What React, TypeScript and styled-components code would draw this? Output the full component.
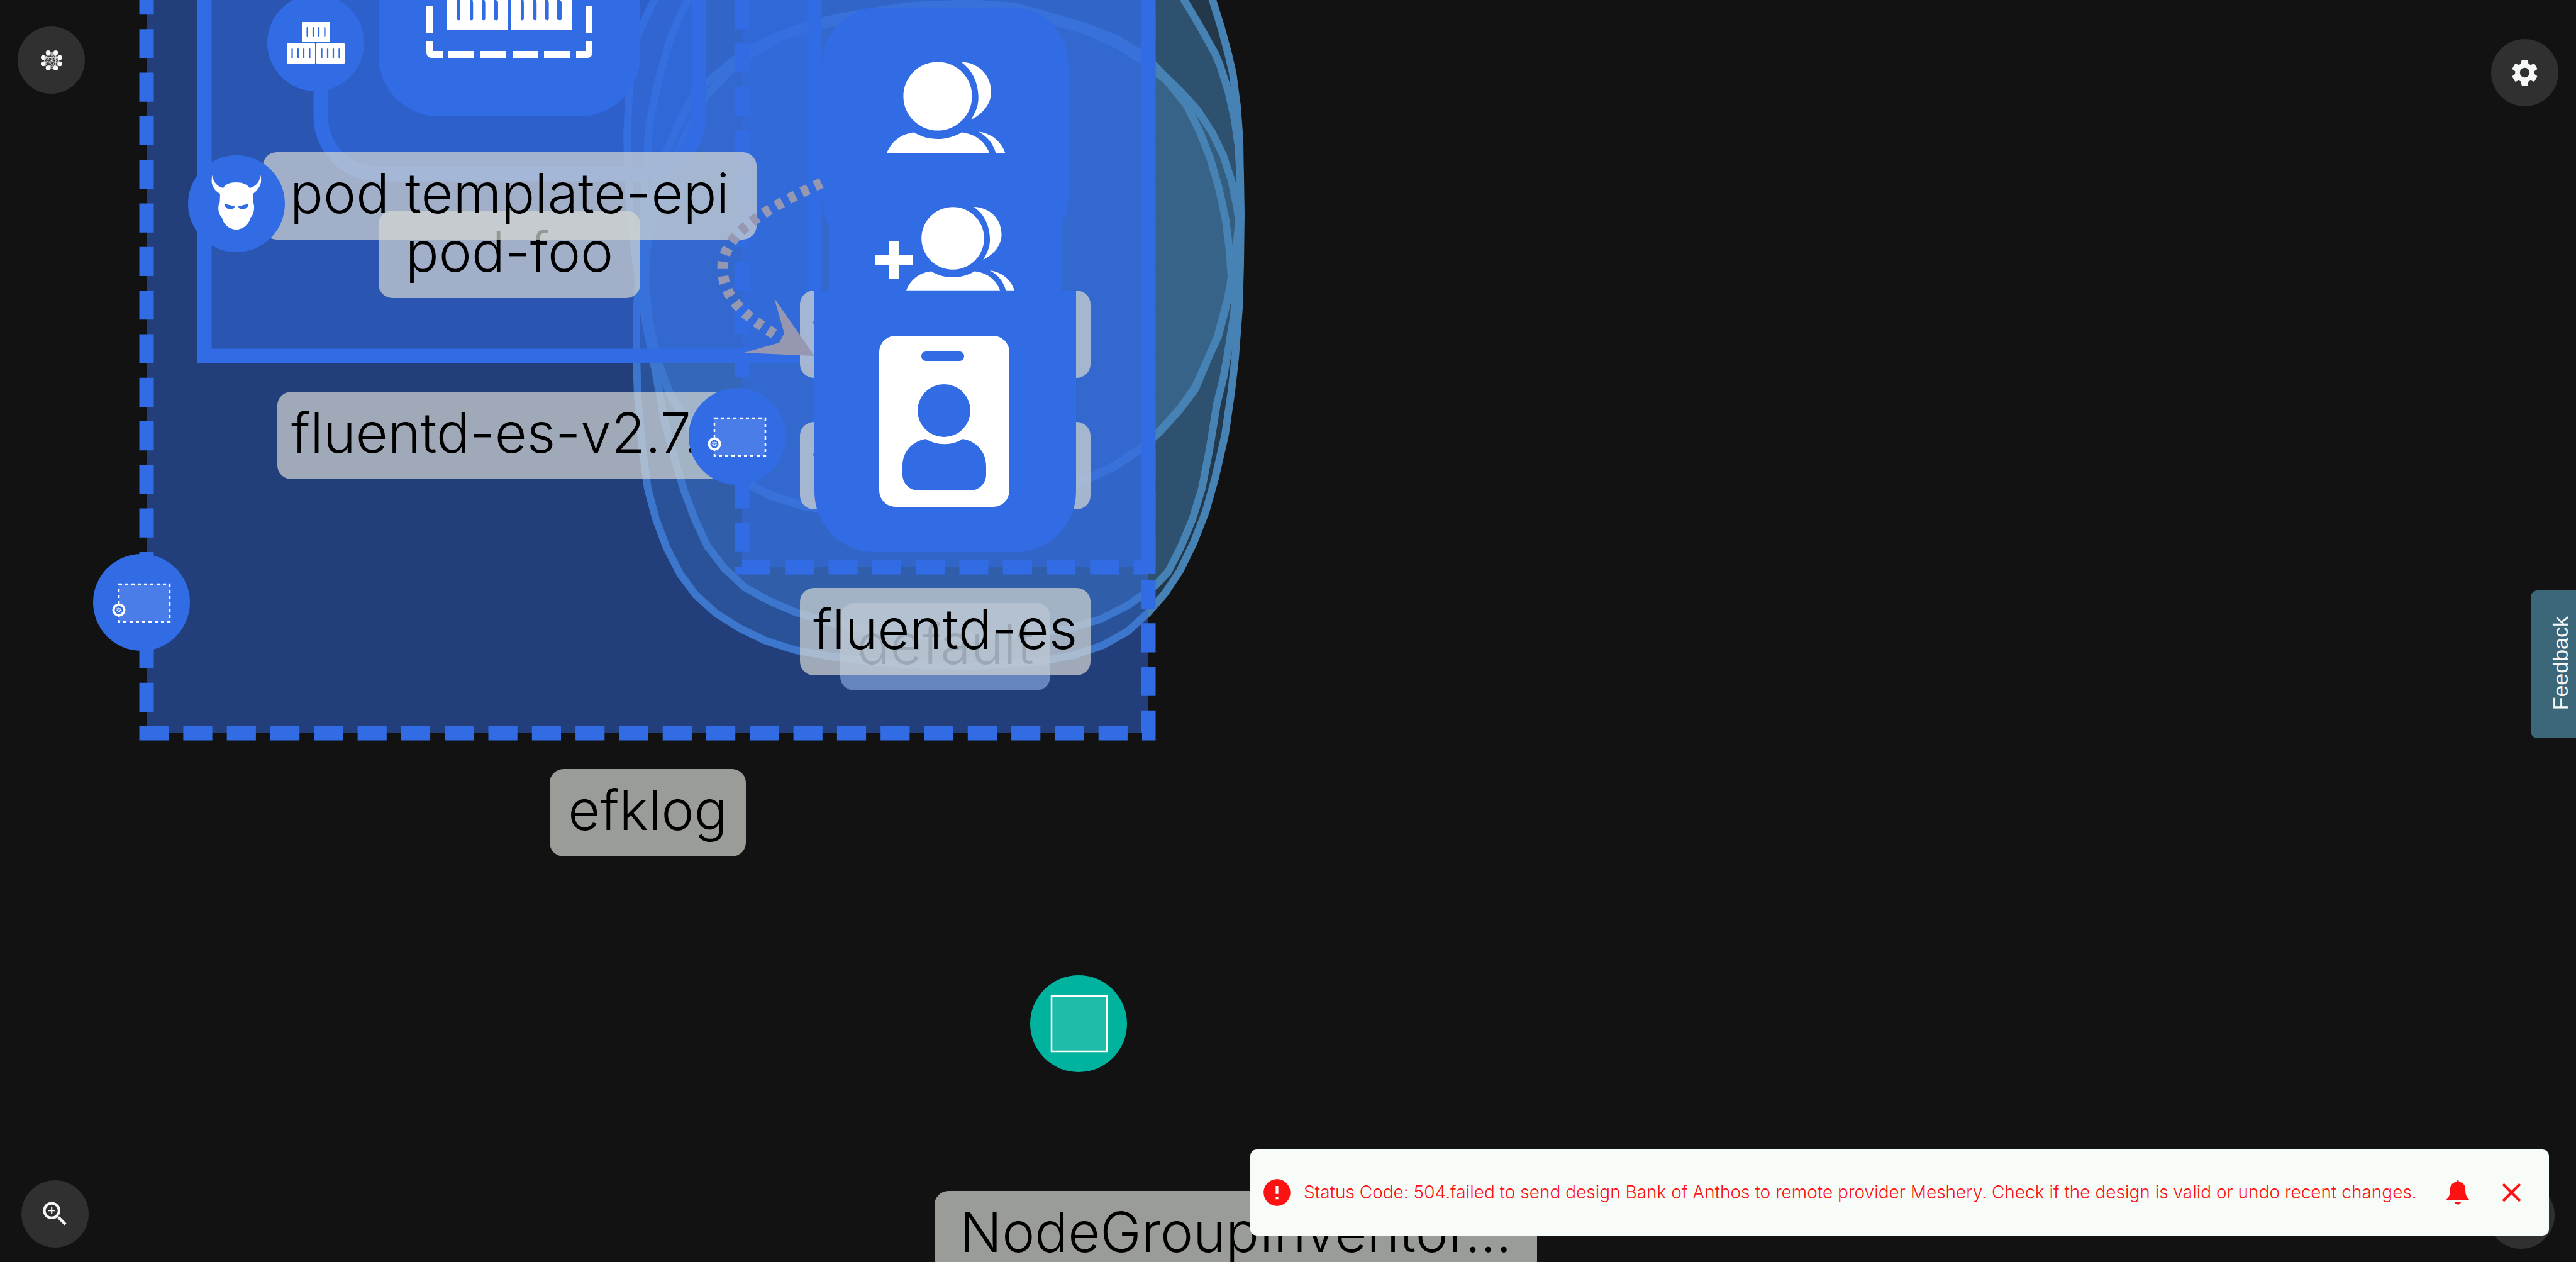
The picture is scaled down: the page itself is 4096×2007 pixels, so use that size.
import React from 'react';
import styled, { createGlobalStyle } from 'styled-components';
import { MdClose, MdError, MdSettings, MdZoomIn } from 'react-icons/md';

const BLUE = '#326ce5';
const TEAL = '#00b39f';
const STEEL = '#4682b4';

const GlobalStyle = createGlobalStyle`
  *, *::before, *::after { box-sizing: border-box; }
  body {
    margin: 0;
    background: #121212;
    font-family: Inter, "Liberation Sans", sans-serif;
  }
`;

const Page = styled.main`
  display: flex;
  min-height: 100vh;
  background: #121212;
`;

const Canvas = styled.section`
  position: relative;
  flex: 1;
  overflow: hidden;
`;

const Layer = styled.svg`
  position: absolute;
  inset: 0;
  width: 100%;
  height: 100%;
`;

type Box = { $x: number; $y: number; $w: number };

const Label = styled.div<Box & { $start?: boolean }>`
  position: absolute;
  left: ${(p) => p.$x}px;
  top: ${(p) => p.$y}px;
  width: ${(p) => p.$w}px;
  height: 139px;
  padding: 0 22px 9px;
  display: flex;
  align-items: center;
  justify-content: ${(p) => (p.$start ? 'flex-start' : 'center')};
  border-radius: 22px;
  background: rgba(212, 215, 210, 0.7);
  color: #000;
  font-size: 88px;
  font-weight: 300;
  line-height: 106px;
  white-space: nowrap;
`;

const Badge = styled.div<{ $x: number; $y: number; $color?: string }>`
  position: absolute;
  left: ${(p) => p.$x}px;
  top: ${(p) => p.$y}px;
  width: 154px;
  height: 154px;
  border-radius: 50%;
  background: ${(p) => p.$color ?? BLUE};

  svg {
    display: block;
    width: 100%;
    height: 100%;
  }
`;

const Overlay = styled.div`
  position: fixed;
  inset: 0;
  pointer-events: none;
`;

const RoundButton = styled.button<{ $corner: 'tl' | 'tr' | 'bl' | 'br' }>`
  position: absolute;
  ${(p) =>
    ({
      tl: 'top: 42px; left: 28px;',
      tr: 'top: 62px; right: 28px;',
      bl: 'bottom: 23px; left: 34px;',
      br: 'bottom: 21px; right: 34px;',
    })[p.$corner]}
  width: 107px;
  height: 107px;
  padding: 0;
  display: flex;
  align-items: center;
  justify-content: center;
  border: 0;
  border-radius: 50%;
  background: #303030;
  color: #f6f8f8;
  font-size: 51px;
  cursor: pointer;
  pointer-events: auto;
`;

const FeedbackTab = styled.button`
  position: absolute;
  top: 939px;
  right: 0;
  width: 72px;
  height: 235px;
  padding: 0 6px 3px 28px;
  display: flex;
  align-items: center;
  justify-content: center;
  border: 0;
  border-radius: 11px 0 0 11px;
  background: #3c6779;
  color: #f6f8f8;
  font-family: "Liberation Sans", Arial, sans-serif;
  font-size: 34px;
  line-height: 38px;
  cursor: pointer;
  pointer-events: auto;
`;

const VerticalText = styled.span`
  writing-mode: vertical-rl;
  transform: rotate(180deg);
`;

const Toast = styled.div`
  position: absolute;
  left: calc(50% - 60px);
  right: 43px;
  bottom: 42px;
  padding: 43px 34px 43px 17px;
  display: flex;
  align-items: center;
  border-radius: 10px;
  background: #f7fcf8;
  color: #fc1212;
  font-size: 51px;
  line-height: 51px;
  pointer-events: auto;

  > svg {
    flex: none;
  }
`;

const Message = styled.p`
  flex: 1;
  margin: 0 0 0 17px;
  font-size: 28px;
  font-weight: 300;
  line-height: 51px;
  white-space: nowrap;
`;

const ToastActions = styled.div`
  display: flex;
  align-items: center;
  gap: 41px;
`;

const IconButton = styled.button`
  padding: 0;
  display: flex;
  border: 0;
  background: none;
  color: inherit;
  font-size: inherit;
  cursor: pointer;
`;

type Point = [number, number];
const toPoints = (pts: Point[]) => pts.map((p) => p.join(',')).join(' ');

const hullTall: Point[] = [
  [1070, -80], [1040, 0], [1013, 58], [1001, 135], [997, 216], [1001, 328], [1010, 405], [1018, 463],
  [1030, 530], [1041, 585], [1057, 671], [1071, 724], [1088, 781], [1105, 826], [1125, 869], [1152, 904],
  [1184, 934], [1222, 955], [1266, 974], [1330, 993], [1400, 1006], [1480, 1013], [1560, 1014], [1640, 1008],
  [1700, 1000], [1749, 985], [1793, 963], [1817, 946], [1838, 930], [1857, 910], [1877, 871], [1896, 826],
  [1911, 777], [1923, 716], [1935, 642], [1945, 602], [1951, 569], [1962, 500], [1968, 430], [1971, 360],
  [1972, 290], [1971, 223], [1967, 169], [1960, 116], [1953, 86], [1942, 45], [1928, 0], [1900, -80],
];

const hullDeep: Point[] = [
  [1140, -80], [1093, 0], [1067, 58], [1047, 127], [1033, 193], [1027, 270], [1021, 366], [1016, 436],
  [1012, 501], [1012, 569], [1014, 630], [1021, 712], [1030, 777], [1043, 826], [1060, 871], [1081, 912],
  [1106, 946], [1138, 975], [1178, 1000], [1217, 1019], [1265, 1034], [1320, 1044], [1395, 1053], [1470, 1058],
  [1550, 1059], [1654, 1052], [1708, 1042], [1754, 1026], [1793, 1004], [1825, 975], [1852, 944], [1876, 908],
  [1898, 863], [1917, 814], [1932, 761], [1948, 691], [1958, 622], [1964, 569], [1970, 490], [1972, 420],
  [1973, 340], [1972, 280], [1969, 232], [1963, 190], [1953, 145], [1940, 104], [1932, 85], [1908, 42],
  [1883, 0], [1830, -80],
];

const hullRoundOuter: Point[] = [
  [1540, 5], [1450, 9], [1395, 17], [1330, 28], [1284, 40], [1240, 55], [1191, 78], [1167, 95], [1122, 133],
  [1099, 158], [1075, 205], [1058, 245], [1040, 300], [1030, 350], [1025, 400], [1024, 440], [1030, 500],
  [1040, 555], [1051, 590], [1064, 625], [1100, 685], [1150, 737], [1195, 773], [1225, 789], [1280, 806],
  [1400, 823], [1550, 820], [1640, 800], [1715, 769], [1773, 742], [1814, 714], [1844, 687], [1875, 653],
  [1901, 618], [1920, 572], [1937, 535], [1949, 490], [1960, 435], [1966, 392], [1970, 351], [1966, 325],
  [1958, 287], [1945, 247], [1927, 210], [1904, 175], [1878, 146], [1852, 121], [1835, 103], [1814, 85],
  [1776, 62], [1730, 44], [1681, 29], [1613, 10],
];

const hullRoundInner: Point[] = [
  [1540, 10], [1450, 15], [1395, 22], [1284, 44], [1240, 60], [1191, 88], [1167, 106], [1122, 153],
  [1099, 198], [1074, 247], [1056, 290], [1040, 340], [1028, 400], [1026, 450], [1031, 500], [1041, 555],
  [1051, 588], [1064, 622], [1100, 683], [1150, 735], [1195, 771], [1225, 787], [1280, 804], [1400, 821],
  [1550, 818], [1640, 798], [1715, 767], [1773, 740], [1814, 712], [1844, 685], [1875, 651], [1900, 616],
  [1920, 572], [1936, 535], [1948, 490], [1954, 470], [1958, 440], [1955, 399], [1949, 350], [1938, 299],
  [1924, 251], [1907, 208], [1887, 168], [1855, 128], [1838, 115], [1814, 95], [1776, 71], [1730, 50],
  [1681, 36], [1613, 16],
];

function Hulls() {
  const hulls: { pts: Point[]; fill: number }[] = [
    { pts: hullTall, fill: 0.35 },
    { pts: hullDeep, fill: 0.35 },
    { pts: hullRoundOuter, fill: 0.25 },
    { pts: hullRoundInner, fill: 0.17 },
  ];
  return (
    <Layer aria-hidden="true">
      {hulls.map((h, i) => (
        <polygon key={i} points={toPoints(h.pts)} fill={STEEL} fillOpacity={h.fill} />
      ))}
      {hulls.map((h, i) => (
        <polygon key={i} points={toPoints(h.pts)} fill="none" stroke={STEEL} strokeWidth="12" />
      ))}
    </Layer>
  );
}

function Groups() {
  return (
    <Layer aria-hidden="true" fill="none" stroke={BLUE} strokeWidth="23">
      <rect x="233" y="-60" width="1593" height="1226" fill={BLUE} fillOpacity="0.5" stroke="none" />
      <path d="M233 -23V1166H1826V0" strokeDasharray="46.2 23.1" />
      <rect x="325" y="-60" width="970" height="626" fill={BLUE} fillOpacity="0.5" />
      <rect x="510" y="-260" width="601" height="537" rx="92" fill={BLUE} fillOpacity="0.5" />
      <rect x="1180" y="-60" width="646" height="962" fill={BLUE} fillOpacity="0.5" stroke="none" />
      <path d="M1180 0V902H1826" strokeDasharray="46.2 23.1" />
      <path d="M1826 0V913" />
    </Layer>
  );
}

function Edge() {
  return (
    <Layer aria-hidden="true">
      <path
        d="M1306 291C1232 326 1149 366 1149 427C1149 478 1194 508 1234 533"
        fill="none"
        stroke="#9598b0"
        strokeWidth="17"
        strokeDasharray="11.5 11.5"
      />
      <path d="M1231 474L1295 566L1183 561L1239 545L1247 530Z" fill="#9598b0" />
    </Layer>
  );
}

function PeopleIcon() {
  return (
    <g fill="#fff">
      <circle r="54.6" />
      <path d="M36.7 -54.7C64 -54 85 -34 85 -6.5C85 12 72 28 53 37.4C62 22 65 14 64.7 0C64 -22 55 -42 36.7 -54.7Z" />
      <path d="M-81 90.6C-74 73 -60 60 -37.4 57.5C-15 71.5 15 71.5 38 57.5C61 60 76 73 82.3 90.6Z" />
      <path d="M64.7 56.3C86 59 101 72 107.5 90.6H92.5C88 75 79 64 64.7 56.3Z" />
    </g>
  );
}

function Container({ x, y, w, h }: { x: number; y: number; w: number; h: number }) {
  return (
    <g>
      <rect x={x} y={y} width={w} height={h} rx="1" fill="#fff" />
      {[0.19, 0.4, 0.6, 0.81].map((f) => (
        <rect key={f} x={x + w * f - w * 0.025} y={y + h * 0.25} width={w * 0.05} height={h * 0.5} rx={w * 0.025} fill={BLUE} />
      ))}
    </g>
  );
}

function Nodes() {
  return (
    <Layer aria-hidden="true">
      <rect x="602" y="-231" width="416" height="416" rx="96" fill={BLUE} />
      <Container x={711} y={-14} w={97} h={62} />
      <Container x={812} y={-14} w={97} h={62} />
      <g fill={BLUE}>
        {[729, 749, 768, 787, 830, 850, 869, 888].map((x) => (
          <rect key={x} x={x - 2} y="-20" width="4.5" height="52" rx="2" />
        ))}
      </g>
      <g fill="#fff">
        <rect x="678" y="10" width="11" height="43" />
        <rect x="931" y="10" width="11" height="43" />
        <path d="M678 65h11v16h15v11h-18a8 8 0 0 1-8-8z" />
        <path d="M942 65h-11v16h-15v11h18a8 8 0 0 0 8-8z" />
        {[713, 764, 815, 865].map((x) => (
          <rect key={x} x={x} y="81" width="41" height="11" />
        ))}
      </g>

      <rect x="1307" y="12" width="392" height="392" rx="90" fill={BLUE} />
      <rect x="1318" y="300" width="370" height="165" fill={BLUE} />
      <g transform="translate(1491 153)">
        <PeopleIcon />
      </g>
      <g transform="translate(1515 379) scale(0.912)">
        <PeopleIcon />
      </g>
      <path d="M1414 383h16v23h22v15h-22v23h-16v-23h-22v-15h22z" fill="#fff" />
    </Layer>
  );
}

function AccountNode() {
  return (
    <Layer aria-hidden="true">
      <path d="M1295 462H1711V782a96 96 0 0 1-96 96H1391a96 96 0 0 1-96-96Z" fill={BLUE} />
      <rect x="1398" y="534" width="207" height="272" rx="26" fill="#fff" />
      <rect x="1465" y="559" width="68" height="15" rx="7" fill={BLUE} />
      <circle cx="1501" cy="653" r="42" fill={BLUE} />
      <path
        d="M1472 698C1490 709 1513 709 1531 698C1553 702 1568 719 1568 741V756a25 25 0 0 1-25 24H1460a25 25 0 0 1-25-24V741C1435 719 1450 702 1472 698Z"
        fill={BLUE}
      />
    </Layer>
  );
}

function NamespaceIcon() {
  const spokes = [0, 51.4, 102.9, 154.3, 205.7, 257.1, 308.6];
  return (
    <svg viewBox="-77 -77 154 154" aria-hidden="true">
      <rect x="-36" y="-29" width="81" height="60" fill="#fff" fillOpacity="0.12" stroke="#fff" strokeWidth="2.5" strokeDasharray="5 5" />
      <circle cx="-36" cy="12" r="10.5" fill="#fff" />
      <g transform="translate(-36 12)">
        <polygon points="0,-7 5.5,-4.3 6.8,1.6 3,6.3 -3,6.3 -6.8,1.6 -5.5,-4.3" fill={BLUE} />
        <circle r="2.8" fill="none" stroke="#fff" strokeWidth="0.8" />
        {spokes.map((a) => (
          <path key={a} d="M0 -1V-5" stroke="#fff" strokeWidth="0.7" transform={`rotate(${a})`} />
        ))}
      </g>
    </svg>
  );
}

function DaemonIcon() {
  return (
    <svg viewBox="299 247 154 154" aria-hidden="true">
      <path
        d="M338 278C338 289 346 297 355 299C358 293 366 290 375.5 290C385 290 393 293 397 299C406 297 414 289 414 278C418 291 412 301 402 308.5L402.5 322C405 326 405 340 398.5 346C396 357 386 365 375.5 365C365 365 355 357 353 346C346 340 346 326 349.5 322L350 308.5C338 301 334 291 338 278Z"
        fill="#fff"
      />
      <path d="M356.5 324L373 328C373 335 358 335 356.5 324Z" fill={BLUE} />
      <path d="M395.5 324L379 328C379 335 394 335 395.5 324Z" fill={BLUE} />
    </svg>
  );
}

function ReplicaIcon() {
  return (
    <svg viewBox="425 -9 154 154" aria-hidden="true">
      <Container x={480} y={35} w={45} h={32} />
      <Container x={456} y={69} w={45} h={32} />
      <Container x={503} y={69} w={45} h={32} />
    </svg>
  );
}

function MeshLogo() {
  const balls: Point[] = [
    [49, 16], [100, 16], [128, 49], [128, 91], [100, 120], [49, 120], [15, 91], [15, 49],
  ];
  return (
    <svg width="34" height="32" viewBox="0 0 144 136" aria-hidden="true">
      {balls.map((a, i) =>
        balls.slice(i + 1).map((b, j) => (
          <line key={`${i}-${j}`} x1={a[0]} y1={a[1]} x2={b[0]} y2={b[1]} stroke="#f6f8f8" strokeWidth="3" />
        )),
      )}
      {balls.map((b, i) => (
        <circle key={i} cx={b[0]} cy={b[1]} r="16" fill="#f6f8f8" />
      ))}
    </svg>
  );
}

function BellIcon() {
  return (
    <svg width="38" height="39" viewBox="0 0 38 39" fill="currentColor" aria-hidden="true">
      <path d="M19 0c-1.4 0-2 1.3-2 2.6C11 3.6 7.4 7.5 7 13c-.3 7 .2 12-7 18.8h38C30.8 25 31.3 20 31 13c-.4-5.5-4-9.4-10-10.4C21 1.3 20.4 0 19 0z" />
      <path d="M14 34h10c0 2.6-2 4.6-5 4.6s-5-2-5-4.6z" />
    </svg>
  );
}

export default function App() {
  return (
    <Page>
      <GlobalStyle />
      <Canvas aria-label="Design canvas">
        <Hulls />
        <Label $x={1336} $y={959} $w={334}>default</Label>
        <Groups />
        <Label $x={602} $y={335} $w={416}>pod-foo</Label>
        <Label $x={418} $y={242} $w={785}>pod template-epi</Label>
        <Label $x={441} $y={623} $w={738} $start>fluentd-es-v2.7.</Label>
        <Label $x={874} $y={1223} $w={312}>efklog</Label>
        <Nodes />
        <Label $x={1272} $y={462} $w={462}>fluentd-es</Label>
        <Label $x={1272} $y={671} $w={462}>fluentd-es</Label>
        <Label $x={1272} $y={935} $w={462}>fluentd-es</Label>
        <Edge />
        <AccountNode />
        <Badge $x={425} $y={-9}>
          <ReplicaIcon />
        </Badge>
        <Badge $x={299} $y={247}>
          <DaemonIcon />
        </Badge>
        <Badge $x={1095} $y={617}>
          <NamespaceIcon />
        </Badge>
        <Badge $x={148} $y={881}>
          <NamespaceIcon />
        </Badge>
        <Badge $x={1638} $y={1551} $color={TEAL}>
          <svg viewBox="0 0 154 154" aria-hidden="true">
            <rect x="34" y="33" width="88" height="88" fill="#fff" fillOpacity="0.12" stroke="#fff" strokeWidth="2.5" />
          </svg>
        </Badge>
        <Label $x={1486} $y={1894} $w={958}>NodeGroupInventor...</Label>
      </Canvas>

      <Overlay>
        <RoundButton $corner="tl" aria-label="Designs">
          <MeshLogo />
        </RoundButton>
        <RoundButton $corner="tr" aria-label="Settings">
          <MdSettings />
        </RoundButton>
        <RoundButton $corner="bl" aria-label="Zoom">
          <MdZoomIn />
        </RoundButton>
        <RoundButton $corner="br" aria-label="Help" />
        <FeedbackTab>
          <VerticalText>Feedback</VerticalText>
        </FeedbackTab>
        <Toast role="alert">
          <MdError aria-hidden="true" />
          <Message>
            Status Code: 504.failed to send design Bank of Anthos to remote provider Meshery. Check if the design is valid
            or undo recent changes.
          </Message>
          <ToastActions>
            <IconButton aria-label="Notifications">
              <BellIcon />
            </IconButton>
            <IconButton aria-label="Close">
              <MdClose />
            </IconButton>
          </ToastActions>
        </Toast>
      </Overlay>
    </Page>
  );
}
